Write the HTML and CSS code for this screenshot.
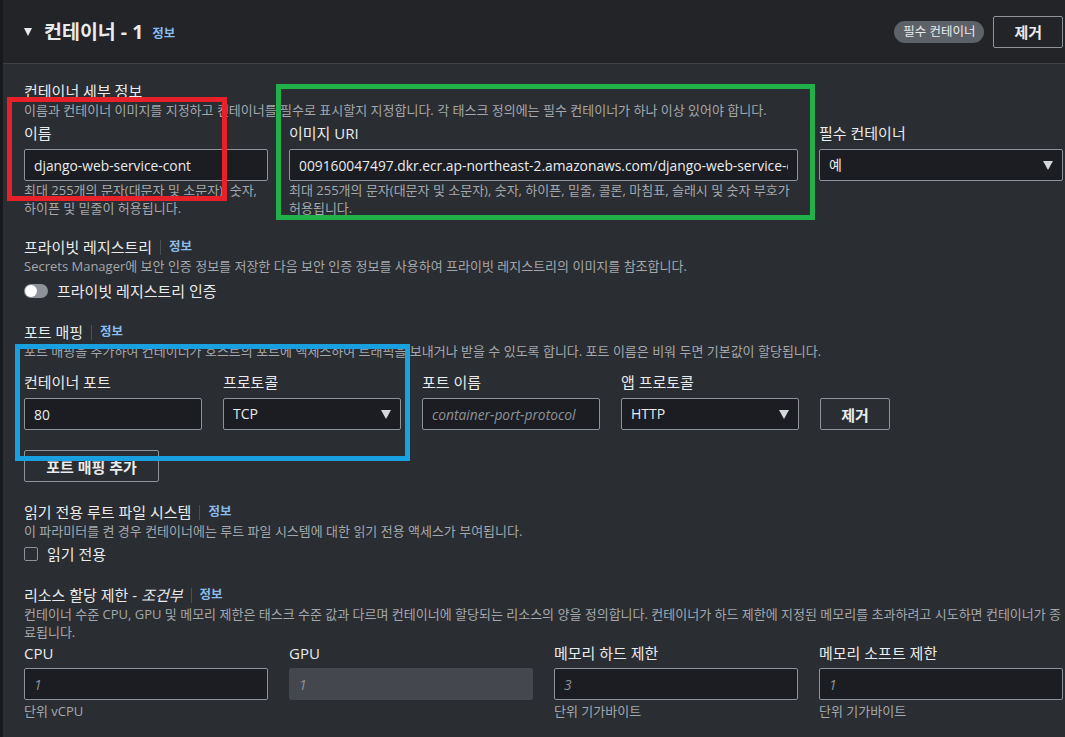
FILE: index.html
```html
<!DOCTYPE html>
<html lang="ko">
<head>
    <meta charset="UTF-8">
    <title>컨테이너 - 1</title>
    <link rel="stylesheet" href="styles.css">
</head>
<body>
    <div class="panel">
        <header class="panel-header">
            <div class="title-wrap">
                <span class="caret"></span>
                <h2>컨테이너 - 1</h2>
                <a class="info" href="#">정보</a>
            </div>
            <div class="header-actions">
                <span class="badge">필수 컨테이너</span>
                <button class="btn">제거</button>
            </div>
        </header>

        <div class="panel-body">
            <!-- 컨테이너 세부 정보 -->
            <section class="group details">
                <div class="group-title">컨테이너 세부 정보</div>
                <p class="desc">이름과 컨테이너 이미지를 지정하고 컨테이너를 필수로 표시할지 지정합니다. 각 태스크 정의에는 필수 컨테이너가 하나 이상 있어야 합니다.</p>
                <div class="grid4">
                    <div class="field">
                        <label>이름</label>
                        <input class="input" type="text" value="django-web-service-cont" readonly>
                        <p class="hint">최대 255개의 문자(대문자 및 소문자), 숫자, 하이픈 및 밑줄이 허용됩니다.</p>
                    </div>
                    <div class="field span2">
                        <label>이미지 URI</label>
                        <input class="input" type="text" value="009160047497.dkr.ecr.ap-northeast-2.amazonaws.com/django-web-service-ecr" readonly>
                        <p class="hint">최대 255개의 문자(대문자 및 소문자), 숫자, 하이픈, 밑줄, 콜론, 마침표, 슬래시 및 숫자 부호가 허용됩니다.</p>
                    </div>
                    <div class="field">
                        <label>필수 컨테이너</label>
                        <div class="select">예</div>
                    </div>
                </div>
            </section>

            <!-- 프라이빗 레지스트리 -->
            <section class="group registry">
                <div class="group-title">프라이빗 레지스트리 <span class="sep"></span><a class="info" href="#">정보</a></div>
                <p class="desc">Secrets Manager에 보안 인증 정보를 저장한 다음 보안 인증 정보를 사용하여 프라이빗 레지스트리의 이미지를 참조합니다.</p>
                <div class="check-row">
                    <span class="toggle"></span>
                    <span>프라이빗 레지스트리 인증</span>
                </div>
            </section>

            <!-- 포트 매핑 -->
            <section class="group ports">
                <div class="group-title">포트 매핑 <span class="sep"></span><a class="info" href="#">정보</a></div>
                <p class="desc">포트 매핑을 추가하여 컨테이너가 호스트의 포트에 액세스하여 트래픽을 보내거나 받을 수 있도록 합니다. 포트 이름은 비워 두면 기본값이 할당됩니다.</p>
                <div class="port-row">
                    <div class="field">
                        <label>컨테이너 포트</label>
                        <input class="input" type="text" value="80" readonly>
                    </div>
                    <div class="field">
                        <label>프로토콜</label>
                        <div class="select">TCP</div>
                    </div>
                    <div class="field">
                        <label>포트 이름</label>
                        <input class="input" type="text" placeholder="container-port-protocol" readonly>
                    </div>
                    <div class="field">
                        <label>앱 프로토콜</label>
                        <div class="select">HTTP</div>
                    </div>
                    <div class="field">
                        <button class="btn">제거</button>
                    </div>
                </div>
                <button class="btn add-btn">포트 매핑 추가</button>
            </section>

            <!-- 읽기 전용 -->
            <section class="group readonly">
                <div class="group-title">읽기 전용 루트 파일 시스템 <span class="sep"></span><a class="info" href="#">정보</a></div>
                <p class="desc">이 파라미터를 켠 경우 컨테이너에는 루트 파일 시스템에 대한 읽기 전용 액세스가 부여됩니다.</p>
                <div class="check-row">
                    <span class="checkbox"></span>
                    <span>읽기 전용</span>
                </div>
            </section>

            <!-- 리소스 할당 제한 -->
            <section class="group resources">
                <div class="group-title">리소스 할당 제한 - <i>조건부</i> <span class="sep"></span><a class="info" href="#">정보</a></div>
                <p class="desc">컨테이너 수준 CPU, GPU 및 메모리 제한은 태스크 수준 값과 다르며 컨테이너에 할당되는 리소스의 양을 정의합니다. 컨테이너가 하드 제한에 지정된 메모리를 초과하려고 시도하면 컨테이너가 종료됩니다.</p>
                <div class="grid4 limits">
                    <div class="field">
                        <label>CPU</label>
                        <input class="input" type="text" placeholder="1" readonly>
                        <p class="hint">단위 vCPU</p>
                    </div>
                    <div class="field">
                        <label>GPU</label>
                        <input class="input disabled" type="text" placeholder="1" disabled>
                    </div>
                    <div class="field">
                        <label>메모리 하드 제한</label>
                        <input class="input" type="text" placeholder="3" readonly>
                        <p class="hint">단위 기가바이트</p>
                    </div>
                    <div class="field">
                        <label>메모리 소프트 제한</label>
                        <input class="input" type="text" placeholder="1" readonly>
                        <p class="hint">단위 기가바이트</p>
                    </div>
                </div>
            </section>
        </div>
    </div>

    <!-- annotation boxes drawn over the screenshot -->
    <div class="mark mark-red"></div>
    <div class="mark mark-green"></div>
    <div class="mark mark-blue"></div>
</body>
</html>
```

FILE: styles.css
```css
body {
    margin: 0;
    background-color: #2a2d31;
    color: #e9ebed;
    font-family: "Open Sans", "Noto Sans CJK KR", sans-serif;
    font-size: 15px;
    overflow: hidden;
}

.panel {
    border-left: 3px solid #17191c;
    min-height: 737px;
}

.panel-header {
    display: flex;
    justify-content: space-between;
    align-items: center;
    height: 63px;
    padding: 0 2px 0 21px;
    background-color: #222428;
    border-bottom: 1px solid #404348;
}

.title-wrap {
    display: flex;
    align-items: center;
}

.caret {
    width: 0;
    height: 0;
    border-left: 4.5px solid transparent;
    border-right: 4.5px solid transparent;
    border-top: 8px solid #e9ebed;
    margin-right: 12px;
    margin-top: 1px;
}

.title-wrap h2 {
    margin: 0;
    font-size: 19.5px;
    font-weight: 700;
    line-height: 24px;
}

.info {
    color: #89bdee;
    font-size: 12.5px;
    font-weight: 700;
    text-decoration: none;
}

.title-wrap .info {
    margin-left: 9px;
    margin-top: 2px;
}

.header-actions {
    display: flex;
    align-items: center;
    gap: 9px;
}

.badge {
    background-color: #5d6168;
    color: #e9ebed;
    font-size: 12.5px;
    line-height: 22px;
    height: 22px;
    padding: 0 9px;
    border-radius: 11px;
}

.btn {
    background: transparent;
    color: #e9ebed;
    border: 1px solid #8d9399;
    border-radius: 2px;
    font-family: inherit;
    font-size: 15px;
    font-weight: 700;
    height: 32px;
    padding: 0 20px;
}

.panel-body {
    padding: 17px 2px 0 21px;
}

.group-title {
    display: flex;
    align-items: center;
    line-height: 20px;
}

.group-title i {
    margin-left: 4px;
}

.sep {
    display: inline-block;
    width: 1px;
    height: 15px;
    background-color: #4b4f55;
    margin: 0 8px 0 8px;
}

.desc {
    margin: 0;
    color: #a3a8ae;
    font-size: 13px;
    line-height: 18px;
}

.grid4 {
    display: grid;
    grid-template-columns: repeat(4, 244px);
    column-gap: 21px;
    margin-top: 4px;
}

.span2 {
    grid-column: span 2;
}

.field label {
    display: block;
    line-height: 20px;
    margin-bottom: 6px;
}

.input {
    display: block;
    box-sizing: border-box;
    width: 100%;
    height: 32px;
    padding: 0 9px;
    background-color: #1b1d22;
    border: 1px solid #8d9399;
    border-radius: 2px;
    color: #e9ebed;
    font-family: inherit;
    font-size: 13.8px;
    outline: none;
}

.input::placeholder {
    color: #8d9399;
    font-style: italic;
}

.input.disabled {
    background-color: #44474d;
    border-color: #44474d;
}

.select {
    position: relative;
    box-sizing: border-box;
    height: 32px;
    line-height: 30px;
    padding: 0 9px;
    background-color: #1b1d22;
    border: 1px solid #8d9399;
    border-radius: 2px;
    font-size: 14px;
}

.select::after {
    content: "";
    position: absolute;
    right: 9px;
    top: 11px;
    border-left: 5.5px solid transparent;
    border-right: 5.5px solid transparent;
    border-top: 9px solid #d5d8db;
}

.hint {
    margin: 0;
    color: #a3a8ae;
    font-size: 13px;
    line-height: 18px;
}

.registry {
    margin-top: 20px;
}

.check-row {
    display: flex;
    align-items: center;
    gap: 9px;
    line-height: 20px;
    margin-top: 6px;
}

.toggle {
    position: relative;
    width: 24px;
    height: 14px;
    border-radius: 7px;
    background-color: #8d9399;
}

.toggle::after {
    content: "";
    position: absolute;
    left: 1px;
    top: 1px;
    width: 12px;
    height: 12px;
    border-radius: 50%;
    background-color: #fff;
}

.ports {
    margin-top: 21px;
}

.port-row {
    display: grid;
    grid-template-columns: repeat(4, 178px) 70px;
    column-gap: 21px;
    margin-top: 12px;
    align-items: end;
}

.port-row .btn {
    width: 70px;
    padding: 0;
}

.add-btn {
    margin-top: 20px;
    width: 135px;
    padding: 0;
}

.readonly {
    margin-top: 20px;
}

.readonly .check-row {
    margin-top: 4px;
}

.checkbox {
    box-sizing: border-box;
    width: 14px;
    height: 14px;
    border: 1px solid #8d9399;
    border-radius: 2px;
}

.resources {
    margin-top: 21px;
}

.limits {
    margin-top: 2px;
}

.limits .field label {
    margin-bottom: 5px;
}

.limits .hint {
    margin-top: 2px;
}

.mark {
    position: absolute;
    border-style: solid;
    border-width: 5px;
}

.mark-red {
    left: 7px;
    top: 97px;
    width: 210px;
    height: 94px;
    border-color: #e8202a;
}

.mark-green {
    left: 276px;
    top: 84px;
    width: 529px;
    height: 126px;
    border-color: #22b04b;
}

.mark-blue {
    left: 15px;
    top: 344px;
    width: 385px;
    height: 107px;
    border-color: #18a0e0;
}
```
